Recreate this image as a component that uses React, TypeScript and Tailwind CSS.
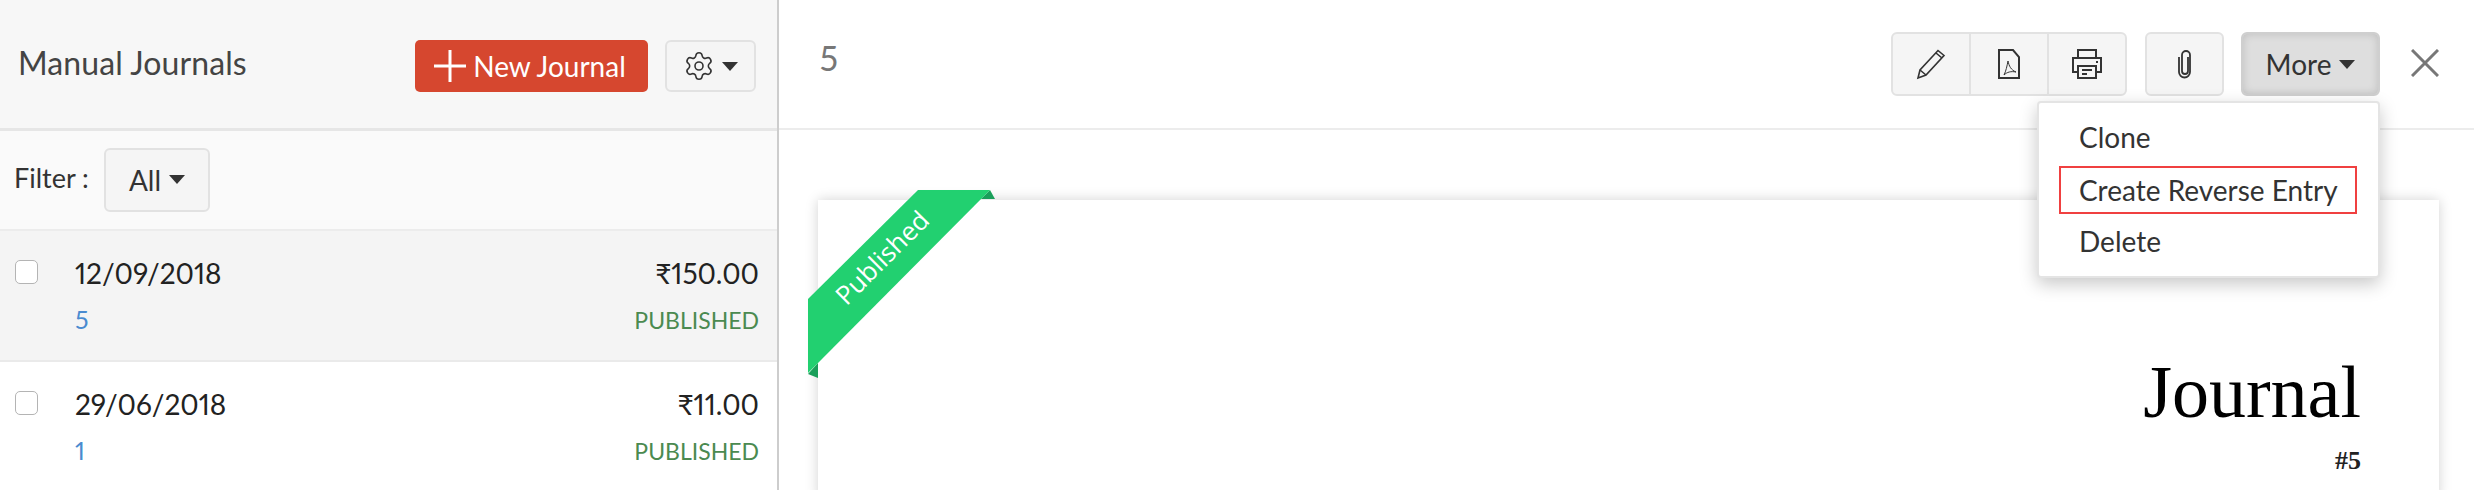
import React from 'react';
import { Settings } from 'lucide-react';

const sans = 'font-[Lato,"Liberation_Sans",sans-serif]';

const Caret = ({ className = '' }: { className?: string }) => (
  <span className={`inline-block w-0 h-0 border-x-[8px] border-x-transparent border-t-[9px] border-t-[#333] ${className}`} />
);

const JournalRow = ({ date, amount, num, active }: { date: string; amount: string; num: string; active?: boolean }) => (
  <div className={`h-[131px] border-b-2 border-[#eaeaea] flex ${active ? 'bg-[#f4f4f4]' : 'bg-white'}`}>
    <div className="w-[75px] pl-[15px] pt-[29px] shrink-0">
      <div className="w-[23px] h-[24px] bg-white rounded-[5px] border border-[#b4b4b4]" />
    </div>
    <div className="flex-1 pr-[18px] pt-[24px]">
      <div className="flex justify-between items-center h-[36px] text-[28px] text-[#222] proportional-nums">
        <span>{date}</span>
        <span>{amount}</span>
      </div>
      <div className="flex justify-between items-center mt-[11px] h-[36px]">
        <span className="text-[25px] text-[#4a8bd0] proportional-nums">{num}</span>
        <span className="text-[23px] text-[#4b8a50]">PUBLISHED</span>
      </div>
    </div>
  </div>
);

export default function App() {
  return (
    <div className={`w-[2474px] h-[490px] overflow-hidden flex bg-white ${sans}`}>
      {/* left list */}
      <div className="w-[779px] shrink-0 border-r-2 border-[#cdcdcd]">
        <div className="h-[131px] bg-[#f7f7f7] border-b-[3px] border-[#e6e6e6] flex items-start pt-[40px]">
          <span className="ml-[18px] mt-[4px] text-[32px] leading-[38px] tracking-[0.1px] text-[#444]">Manual Journals</span>
          <button className="ml-auto w-[233px] h-[52px] bg-[#d6472f] rounded-[5px] text-white text-[28px] flex items-center justify-center gap-[6px] pr-[4px]">
            <svg width="34" height="34" viewBox="0 0 34 34" className="shrink-0">
              <path d="M17 1v32M1 17h32" stroke="#fff" strokeWidth="3" fill="none" />
            </svg>
            New Journal
          </button>
          <button className="ml-[17px] mr-[21px] w-[91px] h-[52px] bg-[#f5f5f5] border-2 border-[#e2e2e2] rounded-[6px] flex items-center justify-center gap-[7px]">
            <Settings size={32} strokeWidth={1.2} color="#333" />
            <Caret />
          </button>
        </div>
        <div className="h-[100px] bg-[#fafafa] border-b-2 border-[#ececec] flex items-center pl-[14px] pb-[1px]">
          <span className="w-[76px] text-[27px] text-[#333] mt-[-2px]">Filter :</span>
          <button className="ml-[14px] w-[106px] h-[64px] bg-[#f5f5f5] border-2 border-[#e2e2e2] rounded-[6px] flex items-center justify-center gap-[8px] text-[28px] text-[#333]">
            All <Caret />
          </button>
        </div>
        <JournalRow date="12/09/2018" amount="₹150.00" num="5" active />
        <JournalRow date="29/06/2018" amount="₹11.00" num="1" />
      </div>

      {/* detail pane */}
      <div className="relative flex-1 min-w-0">
        <div className="h-[130px] border-b-2 border-[#ececec] flex items-start pt-[32px]">
          <span className="ml-[40px] text-[34px] text-[#777]">5</span>
          <div className="ml-auto flex h-[64px] w-[236px] bg-[#f5f5f5] border-2 border-[#e2e2e2] rounded-[6px] divide-x-2 divide-[#e2e2e2]">
            <div className="flex-1 flex items-center justify-center">
              <svg width="30" height="32" viewBox="0 0 30 32" fill="none" stroke="#333" strokeWidth="1.6">
                <path d="M2 30l2-8L22 2.500l6 5L10 27z" />
                <path d="M4 22l6 5M20 5l6 5" />
              </svg>
            </div>
            <div className="flex-1 flex items-center justify-center">
              <svg width="24" height="30" viewBox="0 0 24 30" fill="none" stroke="#333" strokeWidth="2">
                <path d="M2 1h14l6 7v21H2z" />
                <path d="M11 12c1 5 3 9 8 11-5-1-9 0-12 3 2-4 3-9 4-14z" strokeWidth="1" />
              </svg>
            </div>
            <div className="flex-1 flex items-center justify-center">
              <svg width="30" height="30" viewBox="0 0 30 30" fill="none" stroke="#333" strokeWidth="2">
                <path d="M6 9V1h18v8M6 23H1V9h28v14h-5" />
                <path d="M6 17h18v12H6z" />
                <path d="M10 21h10M10 25h5M24 13h2" />
              </svg>
            </div>
          </div>
          <div className="ml-[18px] w-[79px] h-[64px] bg-[#f5f5f5] border-2 border-[#e2e2e2] rounded-[6px] flex items-center justify-center">
            <svg width="16" height="30" viewBox="0 0 16 30" fill="none" stroke="#333" strokeWidth="1.8">
              <path d="M11 8v14a3 3 0 0 1-6 0V6a4 4 0 0 1 8 0v17a5.500 5.500 0 0 1-11 0V8" />
            </svg>
          </div>
          <button className="ml-[17px] w-[139px] h-[64px] bg-[#dedede] border-2 border-[#cfcfcf] rounded-[6px] shadow-[inset_0_0_8px_rgba(0,0,0,0.15)] flex items-center justify-center gap-[8px] text-[28px] text-[#333]">
            More <Caret />
          </button>
          <svg width="28" height="28" viewBox="0 0 28 28" className="ml-[31px] mr-[35px] mt-[17px] shrink-0">
            <path d="M1 1l26 26M27 1L1 27" stroke="#777" strokeWidth="3" fill="none" />
          </svg>
        </div>

        <div className="pt-[70px] pl-[39px] pr-[35px] bg-white">
          <div className="relative h-[300px] bg-white shadow-[0_0_12px_rgba(0,0,0,0.18)] pt-[150px] pr-[78px] text-right font-['Liberation_Serif',serif] text-black">
            <div className="text-[74px] leading-[85px]">Journal</div>
            <div className="text-[26px] font-bold leading-[30px] mt-[11px] text-[#222]">#5</div>

            {/* ribbon */}
            <svg width="200" height="200" viewBox="0 0 200 200" className="absolute left-[-10px] top-[-10px]">
              <path d="M182 0l5 9h-14z" fill="#1a9f5a" />
              <path d="M0 184l10-11v15z" fill="#1a9f5a" />
              <path d="M110 0h72L10 173 0 183v-74z" fill="#22d070" />
            </svg>
            <div className="absolute left-[-6px] top-[38px] w-[140px] text-center -rotate-[45deg] text-white text-[26px] font-['Open_Sans',sans-serif]">Published</div>
          </div>
        </div>

        {/* dropdown menu */}
        <div className={`absolute left-[1258px] top-[101px] w-[343px] h-[177px] bg-white border-2 border-[#e4e4e4] rounded-[4px] shadow-[0_6px_18px_rgba(0,0,0,0.22)] text-[28px] text-[#333] pl-[20px] pt-[9px] ${sans}`}>
          <div className="h-[50px] pl-[20px] flex items-center">Clone</div>
          <div className="h-[48px] w-[298px] border-2 border-[#f04040] pl-[18px] flex items-center mt-[4px]">Create Reverse Entry</div>
          <div className="h-[50px] pl-[20px] flex items-center mt-[2px]">Delete</div>
        </div>
      </div>
    </div>
  );
}
